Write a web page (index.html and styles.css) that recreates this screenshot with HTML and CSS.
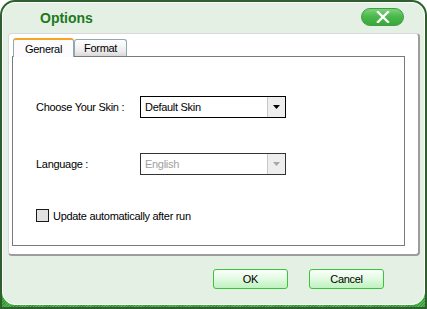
FILE: index.html
```html
<!DOCTYPE html>
<html>
<head>
<meta charset="utf-8">
<link rel="stylesheet" href="styles.css">
</head>
<body>
<div class="window">
  <div class="inner">
    <div class="titlebar">
      <span class="title">Options</span>
      <button class="close" aria-label="Close">
        <svg width="14" height="12" viewBox="0 0 14 12"><path d="M2 1 L12 11 M12 1 L2 11" stroke="#fff" stroke-width="2.4" stroke-linecap="square"/></svg>
      </button>
    </div>
    <div class="panel">
      <div class="tabs">
        <div class="tab active">General</div>
        <div class="tab">Format</div>
      </div>
      <div class="tabbody">
        <div class="form">
          <label class="lbl">Choose Your Skin :</label>
          <div class="combo"><span class="val">Default Skin</span><span class="drop"><svg width="7" height="4" viewBox="0 0 7 4"><path d="M0 0 H7 L3.5 4 Z" fill="#000"/></svg></span></div>
          <label class="lbl">Language :</label>
          <div class="combo disabled"><span class="val">English</span><span class="drop"><svg width="7" height="4" viewBox="0 0 7 4"><path d="M0 0 H7 L3.5 4 Z" fill="#a8a8a8"/></svg></span></div>
        </div>
        <div class="check"><span class="box"></span><span>Update automatically after run</span></div>
      </div>
    </div>
    <div class="footer">
      <button class="btn">OK</button>
      <button class="btn">Cancel</button>
    </div>
  </div>
</div>
</body>
</html>
```

FILE: styles.css
```css
html, body { margin: 0; padding: 0; background: #fff; }
body { font-family: "Liberation Sans", Arial, sans-serif; font-size: 11px; color: #000; letter-spacing: -0.3px; }

.window {
  width: 427px; height: 309px; box-sizing: border-box;
  border: 2px solid #2f5f2f;
  border-radius: 15px 15px 0 0;
  background: repeating-linear-gradient(135deg, #2f9a2f 0 1px, #52b552 1px 2px);
  padding-bottom: 2px;
}
.inner {
  height: 100%; box-sizing: border-box;
  background: #e5f0e5;
  border: 1px solid #fff;
  border-radius: 13px 13px 13px 13px;
  display: flex; flex-direction: column;
}
.titlebar {
  height: 30px; flex: none;
  display: flex; align-items: center; justify-content: space-between;
  padding: 0 20px 0 37px;
}
.title { font-family: "Liberation Sans", Arial, sans-serif; font-weight: bold; font-size: 14px; color: #1c7a1c; margin-top: 0; letter-spacing: 0; }
.close {
  width: 43px; height: 18px; padding: 0; border: 1px solid #3f9f3f; border-radius: 9px;
  background: linear-gradient(#7ed27e, #4cb94c 45%, #3aa73a);
  display: flex; align-items: center; justify-content: center; margin-top: -3px;
}
.panel {
  flex: none; height: 223px; margin: 0 4px 0 5px; box-sizing: border-box;
  background: #fff;
  border: 1px solid #d8d8d8; border-right: 2px solid #9c9c9c; border-bottom: 2px solid #9c9c9c;
  border-radius: 4px;
  padding: 3px 14px 0 3px;
  display: flex; flex-direction: column;
}
.tabs { display: flex; align-items: flex-end; height: 19px; padding-left: 1px; position: relative; z-index: 1; }
.tab {
  height: 17px; box-sizing: border-box; padding: 0 9px; line-height: 16px;
  border: 1px solid #91a7b4; border-bottom: none;
  border-radius: 3px 3px 0 0;
  background: linear-gradient(#fff, #ececec 70%, #d8d8d8);
}
.tab.active {
  height: 19px; background: #fcfcfe; border-top: 2px solid #f5a623;
  padding: 0 11px; line-height: 18px; margin-bottom: -1px;
  border-color: #f5a623 #91a7b4 transparent #91a7b4;
}
.tabbody {
  width: 393px; height: 190px; box-sizing: border-box;
  border: 1px solid #7a7a7a;
  padding: 39px 0 0 23px;
}
.form {
  display: grid; grid-template-columns: 104px 146px; row-gap: 35px; align-items: center;
}
.combo {
  height: 22px; box-sizing: border-box; border: 1px solid #000;
  display: flex; background: #fff;
}
.combo .val { flex: 1; padding-left: 4px; line-height: 20px; }
.combo .drop {
  width: 17px; background: #eeeeee; border-left: 1px solid #c8c8c8;
  display: flex; align-items: center; justify-content: center;
}
.combo.disabled .val { color: #a0a0a0; }
.combo.disabled { border-color: #333; }
.check { display: flex; align-items: center; gap: 4px; margin-top: 34px; }
.check .box { width: 13px; height: 13px; box-sizing: border-box; border: 1px solid #1a1a1a; background: #e2e2e2; }
.footer {
  flex: 1; display: flex; justify-content: flex-end; align-items: flex-start;
  gap: 21px; padding: 13px 40px 0 0;
}
.btn {
  width: 75px; height: 20px; padding: 0;
  font-family: "Liberation Sans", Arial, sans-serif; font-size: 11px; color: #000; letter-spacing: -0.3px;
  border: 1px solid #3bc43b; border-radius: 3px;
  background: linear-gradient(#fbfffb, #e6fbe6 40%, #bff2bf);
}
```
